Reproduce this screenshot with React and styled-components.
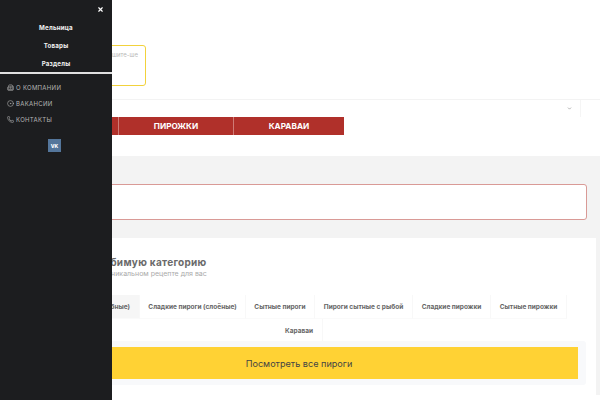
import React from 'react';
import styled, { createGlobalStyle } from 'styled-components';
import { Phone, Building2, CircleDot, ChevronDown, X } from 'lucide-react';

const GlobalStyle = createGlobalStyle`
    html, body {
        margin: 0;
        padding: 0;
        background: #fff;
        overflow: hidden;
    }
    * {
        box-sizing: border-box;
    }
`;

const Page = styled.div`
    position: relative;
    width: 600px;
    height: 400px;
    overflow: hidden;
    font-family: "Inter", "Liberation Sans", sans-serif;
    color: #555;
`;

const Sidebar = styled.aside`
    position: absolute;
    top: 0;
    left: 0;
    bottom: 0;
    width: 112px;
    background: #1c1d1f;
    display: flex;
    flex-direction: column;
`;

const CloseBtn = styled.div`
    align-self: flex-end;
    height: 18px;
    width: 24px;
    display: flex;
    align-items: center;
    justify-content: center;
    color: #fff;
`;

const MainMenu = styled.nav`
    display: flex;
    flex-direction: column;
    align-items: center;
    border-bottom: 2px solid #e0e0e0;
`;

const MainItem = styled.div`
    height: 18px;
    display: flex;
    align-items: center;
    color: #f2f2f2;
    font-size: 6.2px;
    font-weight: 700;
    letter-spacing: 0.2px;
`;

const SubMenu = styled.div`
    display: flex;
    flex-direction: column;
    padding: 5px 0 0 7px;
`;

const SubItem = styled.div`
    height: 16px;
    display: flex;
    align-items: center;
    gap: 2px;
    color: #b5b5b5;
    font-size: 6px;
    font-weight: 400;
    letter-spacing: 0.3px;
    svg {
        flex: none;
    }
`;

const VkBadge = styled.div`
    align-self: flex-start;
    width: 13px;
    height: 13px;
    margin: 12px 0 0 48px;
    background: #54769b;
    color: #fff;
    font-size: 5px;
    font-weight: 800;
    display: flex;
    align-items: center;
    justify-content: center;
`;

const Header = styled.header`
    height: 100px;
    padding: 45px 0 0 60px;
    border-bottom: 1px solid #f3f3f3;
`;

const ContactBox = styled.div`
    width: 86px;
    height: 41px;
    padding: 5px 7px 0 6px;
    border: 1px solid #f2d23c;
    border-radius: 3px;
    color: #b9b9b9;
    font-size: 6px;
    text-align: right;
`;

const TopRow = styled.div`
    height: 17px;
    display: flex;
    justify-content: flex-end;
    align-items: flex-start;
    padding-right: 19px;
`;

const Chevron = styled.div`
    width: 22px;
    height: 17px;
    display: flex;
    justify-content: center;
    padding-top: 6px;
    color: #888;
    border-right: 1px solid #f5f5f5;
`;

const CategoryBar = styled.nav`
    display: flex;
    height: 18px;
    margin-bottom: 21px;
    padding-left: 3px;
`;

const CategoryItem = styled.div`
    width: ${props => props.$w}px;
    display: flex;
    align-items: center;
    justify-content: center;
    background: #b0302a;
    border-left: ${props => (props.$first ? 'none' : '1px solid #cf7b76')};
    color: #fff;
    font-size: 8.2px;
    font-weight: 700;
`;

const GraySection = styled.section`
    height: 239px;
    padding: 28px 4px 0 0;
    background: #f3f3f3;
`;

const AlertBox = styled.div`
    height: 36px;
    margin: 0 9px 18px 20px;
    background: #fff;
    border: 1px solid #d99a96;
    border-radius: 3px;
`;

const Card = styled.div`
    height: 157px;
    padding-top: 18px;
    background: #fff;
    display: flex;
    flex-direction: column;
    align-items: center;
`;

const CardHead = styled.div`
    align-self: flex-start;
    padding-left: 40px;
`;

const Title = styled.h2`
    margin: 0;
    color: #6a6a6a;
    font-size: 10px;
    line-height: 13px;
    font-weight: 700;
    letter-spacing: 0.3px;
`;

const Subtitle = styled.p`
    margin: 0;
    color: #aaa;
    font-size: 7px;
    line-height: 9px;
`;

const Tabs = styled.div`
    width: 560px;
    margin: 17px 0 0 3px;
    display: flex;
    flex-wrap: wrap;
    justify-content: center;
`;

const Tab = styled.div`
    height: 24px;
    width: ${props => props.$w}px;
    display: flex;
    align-items: center;
    justify-content: center;
    white-space: nowrap;
    background: ${props => (props.$active ? '#f6f6f6' : '#fff')};
    border-right: 1px solid #f8f8f8;
    border-bottom: 1px solid #fafafa;
    color: #666;
    font-size: 6.5px;
    font-weight: 700;
`;

const ButtonWrap = styled.div`
    align-self: stretch;
    margin: -2px 10px 0 20px;
    padding: 6px 8px 6px 0;
    background: #f8f9fb;
    border-radius: 3px;
`;

const AllButton = styled.div`
    height: 32px;
    display: flex;
    align-items: center;
    justify-content: center;
    background: #ffd234;
    color: #444;
    font-size: 9.1px;
    font-weight: 400;
`;

const menu = ['Мельница', 'Товары', 'Разделы'];
const links = [
    { label: 'О КОМПАНИИ', Icon: Building2 },
    { label: 'ВАКАНСИИ', Icon: CircleDot },
    { label: 'КОНТАКТЫ', Icon: Phone },
];
const tabs = [
    { label: 'Сладкие пироги (сдобные)', w: 108, active: true },
    { label: 'Сладкие пироги (слоёные)', w: 106 },
    { label: 'Сытные пироги', w: 69 },
    { label: 'Пироги сытные с рыбой', w: 98 },
    { label: 'Сладкие пирожки', w: 78 },
    { label: 'Сытные пирожки', w: 76 },
    { label: 'Караваи', w: 46 },
];

export default function App() {
    return (
        <Page>
            <GlobalStyle />
            <Header>
                <ContactBox>Напишите-ше</ContactBox>
            </Header>
            <TopRow>
                <Chevron><ChevronDown size={5} strokeWidth={3} /></Chevron>
            </TopRow>
            <CategoryBar>
                <CategoryItem $first $w={115} />
                <CategoryItem $w={115}>ПИРОЖКИ</CategoryItem>
                <CategoryItem $w={111}>КАРАВАИ</CategoryItem>
            </CategoryBar>
            <GraySection>
                <AlertBox />
                <Card>
                    <CardHead>
                        <Title>Выберите любимую категорию</Title>
                        <Subtitle>Узнайте больше об уникальном рецепте для вас</Subtitle>
                    </CardHead>
                    <Tabs>
                        {tabs.map(t => (
                            <Tab key={t.label} $w={t.w} $active={t.active}>{t.label}</Tab>
                        ))}
                    </Tabs>
                    <ButtonWrap>
                        <AllButton>Посмотреть все пироги</AllButton>
                    </ButtonWrap>
                </Card>
            </GraySection>
            <Sidebar>
                <CloseBtn><X size={7} strokeWidth={4} /></CloseBtn>
                <MainMenu>
                    {menu.map(m => <MainItem key={m}>{m}</MainItem>)}
                </MainMenu>
                <SubMenu>
                    {links.map(({ label, Icon }) => (
                        <SubItem key={label}><Icon size={7} />{label}</SubItem>
                    ))}
                </SubMenu>
                <VkBadge>VK</VkBadge>
            </Sidebar>
        </Page>
    );
}
